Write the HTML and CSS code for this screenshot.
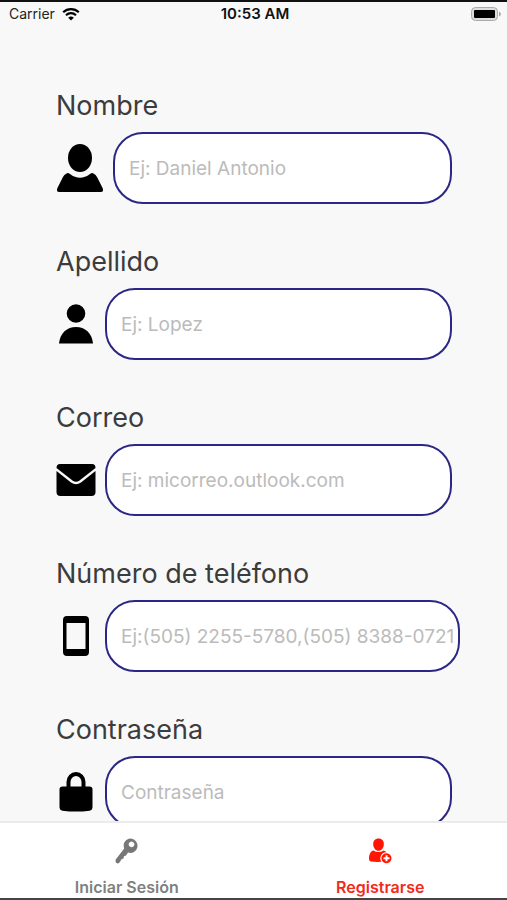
FILE: index.html
```html
<!DOCTYPE html>
<html lang="es">
<head>
  <meta charset="UTF-8">
  <meta name="viewport" content="width=device-width, initial-scale=1">
  <title>Registrarse</title>
  <link rel="stylesheet" href="styles.css">
</head>
<body>
  <header class="status-bar">
    <div class="carrier">
      <span>Carrier</span>
      <svg class="wifi" viewBox="0 0 18 14" aria-hidden="true">
        <path d="M1.2 5.2a11.3 11.3 0 0 1 15.6 0" />
        <path d="M4 8.2a7.2 7.2 0 0 1 10 0" />
        <path class="wifi-dot" d="M9 13.6L6.2 10.8a4 4 0 0 1 5.6 0z" />
      </svg>
    </div>
    <time class="clock">10:53 AM</time>
    <svg class="battery" viewBox="0 0 30 14" aria-hidden="true">
      <rect x="0.5" y="0.5" width="26" height="13" rx="4" fill="#ddd" stroke="#aaa" />
      <rect x="3" y="3" width="21" height="8" rx="1" fill="#000" />
      <path d="M28 4.500q2 1 2 2.500t-2 2.500z" fill="#aaa" />
    </svg>
  </header>

  <main class="content">
    <form class="form">
      <div class="field">
        <label class="field-label" for="nombre">Nombre</label>
        <div class="field-row">
          <svg class="icon icon-large" viewBox="0 0 48 48" aria-hidden="true">
            <ellipse cx="24" cy="14" rx="12" ry="14" />
            <path d="M10.500 29.500q1.500-1 3.500.5 10 7.500 20 0 2-1.500 3.500-.5c1.500.8 2.800 2 3.800 4l5.500 11q1 3.500-2 3.500H3.200q-3 0-2-3.500l5.500-11c1-2 2.300-3.200 3.800-4z" />
          </svg>
          <input class="field-input" type="text" id="nombre" placeholder="Ej: Daniel Antonio">
        </div>
      </div>

      <div class="field">
        <label class="field-label" for="apellido">Apellido</label>
        <div class="field-row">
          <svg class="icon" viewBox="0 0 40 40" aria-hidden="true">
            <circle cx="20" cy="9.500" r="9.300" />
            <path d="M3 39.500C4 29 11 23 20 23s16 6 17 16.500z" />
          </svg>
          <input class="field-input" type="text" id="apellido" placeholder="Ej: Lopez">
        </div>
      </div>

      <div class="field">
        <label class="field-label" for="correo">Correo</label>
        <div class="field-row">
          <svg class="icon" viewBox="0 0 40 40" aria-hidden="true">
            <path d="M4 4h32q3.500 0 3.500 4L23.500 20.500q-3.500 2.500-7 0L.5 8Q.5 4 4 4z" />
            <path d="M.5 11L15 22.500q5 3.500 10 0L39.500 11v21q0 4-4 4h-31q-4 0-4-4z" />
          </svg>
          <input class="field-input" type="email" id="correo" placeholder="Ej: micorreo.outlook.com">
        </div>
      </div>

      <div class="field field-wide">
        <label class="field-label" for="telefono">Número de teléfono</label>
        <div class="field-row">
          <svg class="icon" viewBox="0 0 40 40" aria-hidden="true">
            <path fill-rule="evenodd" d="M11 0h18a4 4 0 0 1 4 4v32a4 4 0 0 1-4 4H11a4 4 0 0 1-4-4V4a4 4 0 0 1 4-4zM10.500 7v26h19V7z" />
          </svg>
          <input class="field-input" type="tel" id="telefono" placeholder="Ej:(505) 2255-5780,(505) 8388-0721">
        </div>
      </div>

      <div class="field">
        <label class="field-label" for="contrasena">Contraseña</label>
        <div class="field-row">
          <svg class="icon" viewBox="0 0 40 40" aria-hidden="true">
            <path d="M12.500 17V10a7.500 8 0 0 1 15 0v7" fill="none" stroke="#000" stroke-width="4" />
            <path d="M6.500 14.500h27q3 0 3 3V35q0 3-3 3.700-13.500 1.800-27 0-3-.7-3-3.700V17.500q0-3 3-3z" />
          </svg>
          <input class="field-input" type="password" id="contrasena" placeholder="Contraseña">
        </div>
      </div>
    </form>
  </main>

  <nav class="tab-bar">
    <a class="tab" href="#iniciar-sesion">
      <svg class="tab-icon" viewBox="0 0 28 28" aria-hidden="true">
        <path fill-rule="evenodd" d="M17.500 1.500a7.200 7.200 0 1 1-2.500 14l-2 3-2 .7-.5 2.300-2 .8-2 3.200q-1.500 1.500-3 .5t-.8-3.500l8.500-11A7.200 7.200 0 0 1 17.500 1.500zM18.500 4.500a2.900 2.900 0 1 0 .1 0z" />
      </svg>
      <span>Iniciar Sesión</span>
    </a>
    <a class="tab tab-active" href="#registrarse" aria-current="page">
      <svg class="tab-icon" viewBox="0 0 28 28" aria-hidden="true">
        <path d="M12.500 1.500c3.500 0 5.500 2.500 5.300 6-.2 3.500-2.300 6.300-5.300 6.300S7.400 11 7.200 7.500C7 4 9 1.500 12.500 1.500z" />
        <path d="M7.500 13.500q2 1.500 5 1.500t5-1.500q2 .5 3.200 1.800a6 6 0 0 0-5.200 9.500q-6 .4-10.500-.3-2-.4-2-2.500c0-4.500 1.500-8 4.500-8.500z" />
        <path fill-rule="evenodd" d="M20.500 16.200a5 5 0 1 1-.1 0zM19.500 18.200v2h-2v2h2v2h2v-2h2v-2h-2v-2z" />
      </svg>
      <span>Registrarse</span>
    </a>
  </nav>
</body>
</html>
```
FILE: styles.css
```css
* {
  box-sizing: border-box;
}

body {
  display: flex;
  flex-direction: column;
  height: 100vh;
  margin: 0;
  background-color: #f8f8f9;
  color: #3c3c3c;
  font-family: Inter, "Liberation Sans", sans-serif;
}

/* Status bar */
.status-bar {
  display: grid;
  grid-template-columns: 1fr auto 1fr;
  align-items: center;
  padding: 2px 6px 2px 9px;
  border-top: 2px solid #111;
  color: #222;
  font-size: 14px;
  line-height: 20px;
}

.carrier {
  display: flex;
  align-items: center;
  gap: 7px;
}

.wifi {
  width: 18px;
  height: 14px;
  fill: none;
  stroke: #000;
  stroke-width: 2.2;
}

.wifi .wifi-dot {
  fill: #000;
  stroke: none;
}

.clock {
  color: #111;
  font-size: 15px;
  font-weight: 600;
}

.battery {
  justify-self: end;
  width: 30px;
  height: 14px;
}

/* Form */
.content {
  flex: 1;
  min-height: 0;
  overflow-y: auto;
  scrollbar-width: none;
}

.form {
  display: flex;
  flex-direction: column;
  gap: 40px;
  padding: 62px 55px 40px 56px;
}

.field {
  display: flex;
  flex-direction: column;
  gap: 8px;
}

.field-wide {
  margin-right: -8px;
}

.field-label {
  font-size: 27px;
  line-height: 36px;
}

.field-row {
  display: flex;
  align-items: center;
  gap: 9px;
}

.icon {
  flex: none;
  width: 40px;
  height: 40px;
}

.icon-large {
  width: 48px;
  height: 48px;
}

.field-input {
  flex: 1;
  min-width: 0;
  height: 72px;
  padding: 0 0 0 14px;
  border: 2px solid #2b2785;
  border-radius: 30px;
  background-color: #fff;
  color: #3c3c3c;
  font-family: inherit;
  font-size: 19px;
}

.field-input::placeholder {
  color: #bbb;
  opacity: 1;
}

/* Bottom tabs */
.tab-bar {
  display: flex;
  border-top: 2px solid #ebebec;
  border-bottom: 2px solid #444;
  background-color: #fff;
}

.tab {
  display: flex;
  flex: 1;
  flex-direction: column;
  align-items: center;
  gap: 12px;
  padding: 14px 0 1px;
  color: #808080;
  font-size: 16px;
  font-weight: 600;
  line-height: 20px;
  text-decoration: none;
}

.tab-icon {
  width: 28px;
  height: 28px;
  fill: #777;
}

.tab-active {
  color: #f02a1d;
}

.tab-active .tab-icon {
  fill: #ff1500;
}
```
